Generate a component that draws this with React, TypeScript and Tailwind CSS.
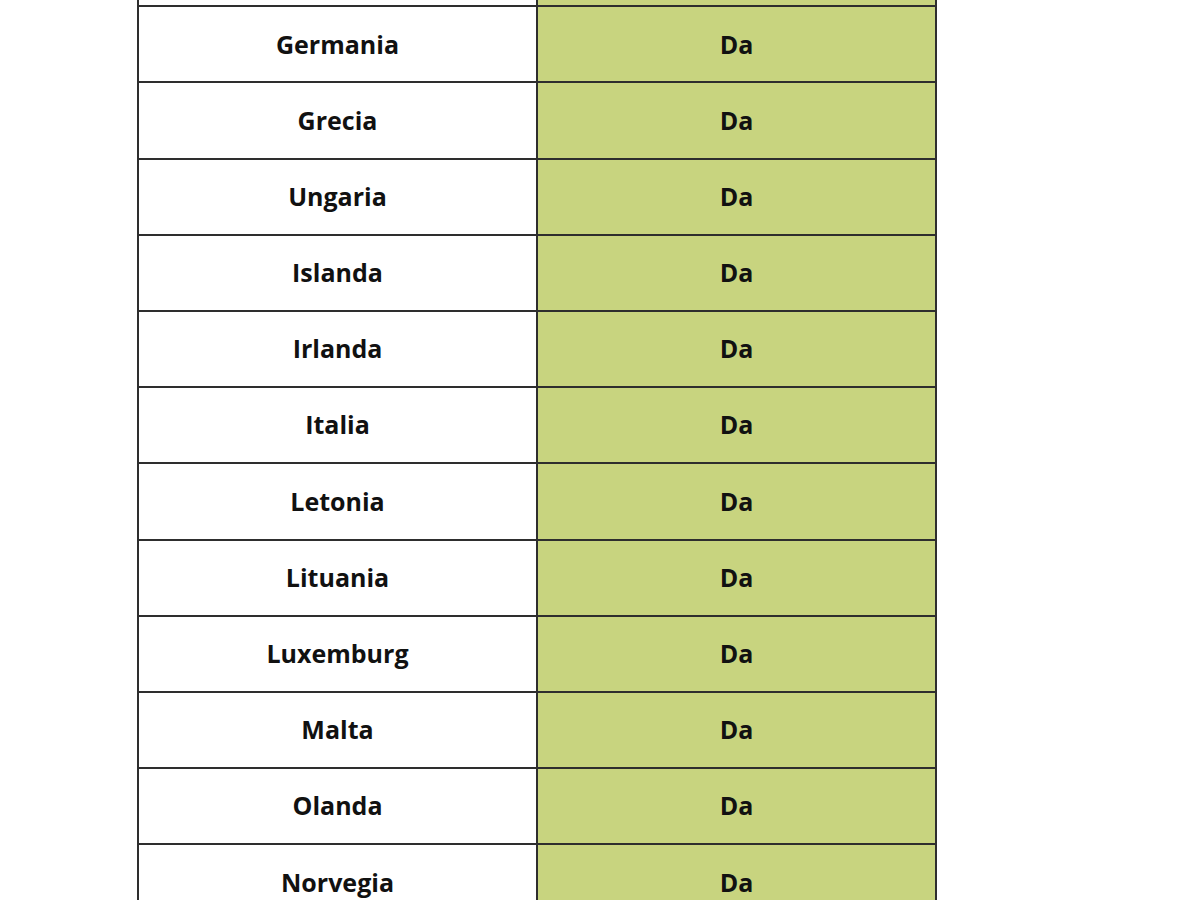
import React from "react";

const countries = [
  "",
  "Germania",
  "Grecia",
  "Ungaria",
  "Islanda",
  "Irlanda",
  "Italia",
  "Letonia",
  "Lituania",
  "Luxemburg",
  "Malta",
  "Olanda",
  "Norvegia",
];

export default function App() {
  return (
    <div className="w-[1200px] h-[900px] overflow-hidden bg-white">
      <div
        className="ml-[137px] mt-[-71px] w-[800px] border-l-2 border-r-2 border-[#2e2e2e]"
        style={{ fontFamily: '"Open Sans", "Liberation Sans", sans-serif' }}
      >
        {countries.map((c, i) => (
          <div key={i} className="flex h-[76.2px] border-t-2 border-[#2e2e2e]">
            <div className="w-[399px] flex items-center justify-center border-r-2 border-[#2e2e2e] text-[25px] font-bold text-[#111]">
              {c}
            </div>
            <div className="flex-1 flex items-center justify-center bg-[#c8d47f] text-[25px] font-bold text-[#111]">
              {c ? "Da" : ""}
            </div>
          </div>
        ))}
      </div>
    </div>
  );
}
